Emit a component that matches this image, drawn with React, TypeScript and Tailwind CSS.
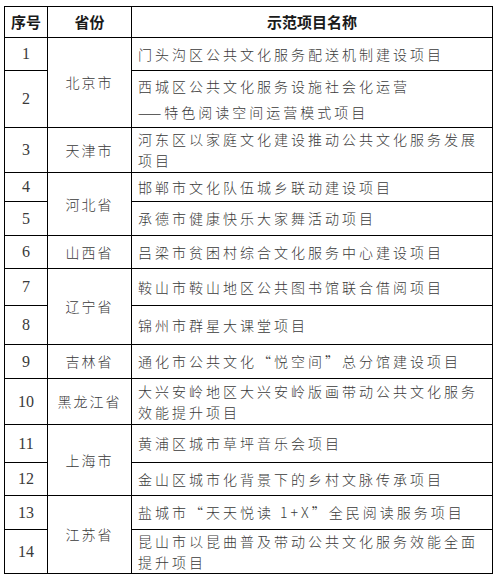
const rows: { n: string; h: number; lines: string[]; prov?: string; span?: number }[] = [
  { n: "1", h: 33, lines: ["门头沟区公共文化服务配送机制建设项目"], prov: "北京市", span: 2 },
  { n: "2", h: 57, lines: ["西城区公共文化服务设施社会化运营", "——特色阅读空间运营模式项目"] },
  { n: "3", h: 45, lines: ["河东区以家庭文化建设推动公共文化服务发展", "项目"], prov: "天津市", span: 1 },
  { n: "4", h: 29, lines: ["邯郸市文化队伍城乡联动建设项目"], prov: "河北省", span: 2 },
  { n: "5", h: 34, lines: ["承德市健康快乐大家舞活动项目"] },
  { n: "6", h: 33, lines: ["吕梁市贫困村综合文化服务中心建设项目"], prov: "山西省", span: 1 },
  { n: "7", h: 37, lines: ["鞍山市鞍山地区公共图书馆联合借阅项目"], prov: "辽宁省", span: 2 },
  { n: "8", h: 39, lines: ["锦州市群星大课堂项目"] },
  { n: "9", h: 34, lines: ["通化市公共文化“悦空间”总分馆建设项目"], prov: "吉林省", span: 1 },
  { n: "10", h: 46, lines: ["大兴安岭地区大兴安岭版画带动公共文化服务", "效能提升项目"], prov: "黑龙江省", span: 1 },
  { n: "11", h: 38, lines: ["黄浦区城市草坪音乐会项目"], prov: "上海市", span: 2 },
  { n: "12", h: 33, lines: ["金山区城市化背景下的乡村文脉传承项目"] },
  { n: "13", h: 34, lines: ["盐城市“天天悦读 1+X”全民阅读服务项目"], prov: "江苏省", span: 2 },
  { n: "14", h: 44, lines: ["昆山市以昆曲普及带动公共文化服务效能全面", "提升项目"] },
];

const cjk = "font-['Noto_Sans_CJK_SC','Noto_Sans',sans-serif]";

export default function App() {
  return (
    <div className="w-[499px] h-[579px] bg-white pt-[6px] pl-[4px]">
      <table className="w-[488px] table-fixed border-collapse text-[#3a3a3a]">
        <colgroup>
          <col className="w-[43px]" />
          <col className="w-[84px]" />
          <col className="w-[361px]" />
        </colgroup>
        <thead>
          <tr className="h-[31px]">
            <th className={`border border-black text-[15px] font-bold text-[#1a1a1a] ${cjk}`}>序号</th>
            <th className={`border border-black text-[15px] font-bold text-[#1a1a1a] ${cjk}`}>省份</th>
            <th className={`border border-black text-[15px] font-bold text-[#1a1a1a] ${cjk}`}>示范项目名称</th>
          </tr>
        </thead>
        <tbody>
          {rows.map((r) => (
            <tr key={r.n} style={{ height: r.h }}>
              <td className="border border-black text-center align-middle font-['Liberation_Serif',serif] text-[16px]">
                {r.n}
              </td>
              {r.prov && (
                <td
                  rowSpan={r.span}
                  className={`border border-black text-center align-middle text-[14px] tracking-[2px] font-light ${cjk}`}
                >
                  {r.prov}
                </td>
              )}
              <td
                className={`border border-black align-middle pl-[6px] pr-1 text-[14px] tracking-[3px] font-light whitespace-nowrap ${cjk} ${
                  r.n === "2" ? "leading-[26px]" : "leading-[21px]"
                }`}
              >
                {r.lines.map((l) => (
                  <div key={l}>{l}</div>
                ))}
              </td>
            </tr>
          ))}
        </tbody>
      </table>
    </div>
  );
}
